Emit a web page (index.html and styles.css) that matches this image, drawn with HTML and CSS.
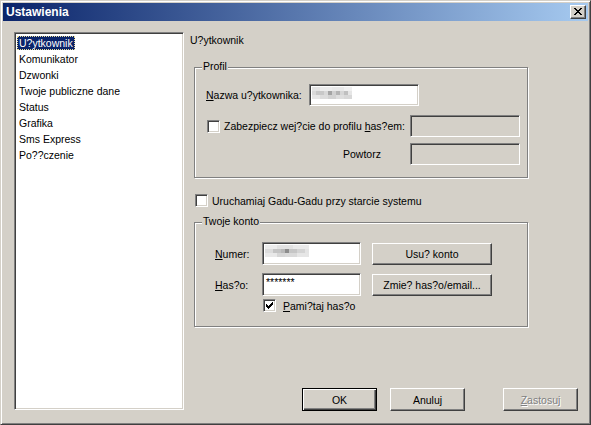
FILE: index.html
```html
<!DOCTYPE html>
<html lang="pl">
<head>
<meta charset="utf-8">
<title>Ustawienia</title>
<link rel="stylesheet" href="styles.css">
</head>
<body>
<div class="window">
  <div class="titlebar">
    <div class="title">Ustawienia</div>
    <div class="close">
      <svg width="8" height="7" viewBox="0 0 8 7" shape-rendering="crispEdges">
        <g fill="#000">
          <rect x="0" y="0" width="2" height="1"/><rect x="6" y="0" width="2" height="1"/>
          <rect x="1" y="1" width="2" height="1"/><rect x="5" y="1" width="2" height="1"/>
          <rect x="2" y="2" width="4" height="1"/>
          <rect x="3" y="3" width="2" height="1"/>
          <rect x="2" y="4" width="4" height="1"/>
          <rect x="1" y="5" width="2" height="1"/><rect x="5" y="5" width="2" height="1"/>
          <rect x="0" y="6" width="2" height="1"/><rect x="6" y="6" width="2" height="1"/>
        </g>
      </svg>
    </div>
  </div>
  <div class="client">
    <div class="listbox">
      <div class="item"><span class="sel">U?ytkownik</span></div>
      <div class="item">Komunikator</div>
      <div class="item">Dzwonki</div>
      <div class="item">Twoje publiczne dane</div>
      <div class="item">Status</div>
      <div class="item">Grafika</div>
      <div class="item">Sms Express</div>
      <div class="item">Po??czenie</div>
    </div>
    <div class="panel">
      <div class="header">U?ytkownik</div>

      <div class="group profil">
        <span class="legend">Profil</span>
        <div class="row r-name">
          <span class="lbl-name"><u>N</u>azwa u?ytkownika:</span>
          <div class="edit w110">
            <svg class="blur" width="44" height="16" viewBox="0 0 44 16" shape-rendering="crispEdges">
              <rect x="0" y="0" width="8" height="4" fill="#e4e4e4"/>
              <rect x="8" y="0" width="12" height="4" fill="#ececec"/>
              <rect x="20" y="0" width="12" height="4" fill="#e8e8e8"/>
              <rect x="32" y="0" width="8" height="4" fill="#f0f0f0"/>
              <rect x="0" y="4" width="4" height="4" fill="#dadada"/>
              <rect x="4" y="4" width="8" height="4" fill="#c8c8c8"/>
              <rect x="12" y="4" width="4" height="4" fill="#d8d8d8"/>
              <rect x="16" y="4" width="4" height="4" fill="#a4a4a4"/>
              <rect x="20" y="4" width="4" height="4" fill="#d0d0d0"/>
              <rect x="24" y="4" width="4" height="4" fill="#b4b4b4"/>
              <rect x="28" y="4" width="4" height="4" fill="#d6d6d6"/>
              <rect x="32" y="4" width="4" height="4" fill="#c0c0c0"/>
              <rect x="36" y="4" width="4" height="4" fill="#e6e6e6"/>
              <rect x="0" y="8" width="8" height="4" fill="#e6e6e6"/>
              <rect x="8" y="8" width="8" height="4" fill="#dcdcdc"/>
              <rect x="16" y="8" width="8" height="4" fill="#d2d2d2"/>
              <rect x="24" y="8" width="8" height="4" fill="#dedede"/>
              <rect x="32" y="8" width="8" height="4" fill="#d8d8d8"/>
            </svg>
          </div>
        </div>
        <div class="row r-prot">
          <span class="check"></span>
          <span class="ctext">Zabezpiecz wej?cie do profilu <u>h</u>as?em:</span>
          <div class="edit disabled w110 push"></div>
        </div>
        <div class="row r-rep">
          <span class="lbl-rep">Powtorz</span>
          <div class="edit disabled w110 push"></div>
        </div>
      </div>

      <div class="row r-auto">
        <span class="check"></span>
        <span class="ctext">Uruchamiaj Gadu-Gadu przy starcie systemu</span>
      </div>

      <div class="group konto">
        <span class="legend">Twoje konto</span>
        <div class="row r-num">
          <span class="lbl-k"><u>N</u>umer:</span>
          <div class="edit w99">
            <svg class="blur2" width="48" height="16" viewBox="0 0 48 16" shape-rendering="crispEdges">
              <rect x="0" y="0" width="12" height="4" fill="#ececec"/>
              <rect x="12" y="0" width="16" height="4" fill="#e2e2e2"/>
              <rect x="28" y="0" width="16" height="4" fill="#eaeaea"/>
              <rect x="0" y="4" width="8" height="4" fill="#dcdcdc"/>
              <rect x="8" y="4" width="8" height="4" fill="#c4c4c4"/>
              <rect x="16" y="4" width="4" height="4" fill="#b8b8b8"/>
              <rect x="20" y="4" width="4" height="4" fill="#8c8c8c"/>
              <rect x="24" y="4" width="8" height="4" fill="#c6c6c6"/>
              <rect x="32" y="4" width="8" height="4" fill="#d4d4d4"/>
              <rect x="40" y="4" width="4" height="4" fill="#e4e4e4"/>
              <rect x="0" y="8" width="12" height="4" fill="#e8e8e8"/>
              <rect x="12" y="8" width="8" height="4" fill="#d6d6d6"/>
              <rect x="20" y="8" width="12" height="4" fill="#dadada"/>
              <rect x="32" y="8" width="12" height="4" fill="#e6e6e6"/>
            </svg>
          </div>
          <div class="btn w120">Usu? konto</div>
        </div>
        <div class="row r-pass">
          <span class="lbl-k"><u>H</u>as?o:</span>
          <div class="edit w99"><span class="pw">*******</span></div>
          <div class="btn w120">Zmie? has?o/email...</div>
        </div>
        <div class="row r-rem">
          <span class="check checked">
            <svg width="7" height="7" viewBox="0 0 7 7" shape-rendering="crispEdges">
              <g fill="#000">
                <rect x="0" y="2" width="1" height="3"/>
                <rect x="1" y="3" width="1" height="3"/>
                <rect x="2" y="4" width="1" height="3"/>
                <rect x="3" y="3" width="1" height="3"/>
                <rect x="4" y="2" width="1" height="3"/>
                <rect x="5" y="1" width="1" height="3"/>
                <rect x="6" y="0" width="1" height="3"/>
              </g>
            </svg>
          </span>
          <span class="ctext rem"><u>P</u>ami?taj has?o</span>
        </div>
      </div>

      <div class="buttons">
        <div class="btn default">OK</div>
        <div class="btn">Anuluj</div>
        <div class="btn off"><u>Z</u>astosuj</div>
      </div>
    </div>
  </div>
</div>
</body>
</html>
```
FILE: styles.css
```css
* { box-sizing: border-box; }
html, body { margin: 0; padding: 0; }
body {
  width: 591px;
  height: 425px;
  overflow: hidden;
  background: #d4d0c8;
  font-family: "Liberation Sans", Arial, sans-serif;
  font-size: 10.5px;
  color: #000;
}
u { text-decoration: underline; text-underline-offset: 1px; }

.window {
  width: 591px;
  height: 425px;
  background: #d4d0c8;
  border: 1px solid;
  border-color: #d4d0c8 #404040 #404040 #d4d0c8;
  box-shadow: inset 1px 1px #fff, inset -1px -1px #808080;
  padding: 2px;
  display: flex;
  flex-direction: column;
}

.titlebar {
  flex: none;
  height: 18px;
  display: flex;
  align-items: center;
  padding: 0 2px 0 3px;
  background: linear-gradient(to right, #0a246a, #a6caf0);
  color: #fff;
  font-weight: bold;
  font-size: 12px;
}
.title { flex: 1; line-height: 18px; }
.close {
  width: 16px;
  height: 14px;
  background: #d4d0c8;
  border: 1px solid;
  border-color: #fff #404040 #404040 #fff;
  box-shadow: inset -1px -1px #808080;
  display: flex;
  align-items: center;
  justify-content: center;
  padding: 0 1px 1px 0;
}
.close svg { display: block; }

.client {
  flex: 1;
  display: flex;
  padding: 11px 0 0 11px;
}

.listbox {
  flex: none;
  width: 170px;
  height: 378px;
  background: #fff;
  border: 1px solid;
  border-color: #808080 #fff #fff #808080;
  box-shadow: inset 1px 1px #404040, inset -1px -1px #d4d0c8;
  padding: 2px 2px;
}
.item {
  height: 16px;
  line-height: 17px;
  padding-left: 2px;
  white-space: nowrap;
}
.item .sel {
  display: inline-block;
  margin-left: -2px;
  padding: 0 2px;
  line-height: 14px;
  height: 14px;
  margin-top: 1px;
  vertical-align: top;
  background: #0a246a;
  color: #fff;
  outline: 1px dotted #e8dc98;
  outline-offset: -1px;
}

.panel {
  flex: 1;
  display: flex;
  flex-direction: column;
  margin-left: 6px;
  padding: 0 10px 11px 0;
}
.header { height: 16px; line-height: 16px; }

.group {
  position: relative;
  width: 334px;
  margin-left: 4px;
  border: 1px solid #808080;
  box-shadow: inset 1px 1px #fff, 1px 1px #fff;
}
.legend {
  position: absolute;
  top: -8px;
  left: 7px;
  padding: 0 1px;
  line-height: 13px;
  background: #d4d0c8;
}
.profil {
  margin-top: 19px;
  height: 111px;
  padding: 0 7px 0 11px;
}
.konto {
  margin-top: 15px;
  height: 105px;
  padding: 0 0 0 20px;
}

.row { display: flex; align-items: center; }
.r-name { margin-top: 16px; height: 22px; }
.lbl-name { width: 103px; white-space: nowrap; }
.r-prot { margin-top: 9px; height: 22px; }
.r-prot .check { margin-left: 1px; }
.r-rep { margin-top: 6px; height: 22px; }
.lbl-rep { margin-left: 137px; }
.push { margin-left: auto; }

.r-auto { margin-top: 16px; margin-left: 5px; height: 13px; }

.r-num { margin-top: 19px; height: 23px; }
.r-pass { margin-top: 8px; height: 23px; }
.lbl-k { width: 47px; }
.r-rem { margin-top: 3px; height: 13px; }
.r-rem .check { margin-left: 48px; }
.rem { margin-left: 7px !important; }

.check {
  flex: none;
  width: 13px;
  height: 13px;
  background: #fff;
  border: 1px solid;
  border-color: #808080 #fff #fff #808080;
  box-shadow: inset 1px 1px #404040, inset -1px -1px #d4d0c8;
  display: flex;
  align-items: flex-start;
  justify-content: flex-start;
  padding: 2px 0 0 2px;
}
.check svg { display: block; }
.ctext { margin-left: 4px; white-space: nowrap; }

.edit {
  flex: none;
  height: 22px;
  background: #fff;
  border: 1px solid;
  border-color: #808080 #fff #fff #808080;
  box-shadow: inset 1px 1px #404040, inset -1px -1px #d4d0c8;
  padding: 1px 0 0 2px;
  position: relative;
}
.edit.disabled { background: #d4d0c8; }
.r-num .edit, .r-pass .edit { height: 23px; }
.w110 { width: 110px; }
.w99 { width: 99px; }
.blur { display: block; margin: 1px 0 0 0; }
.blur2 { display: block; margin: 1px 0 0 0; }
.pw { display: block; line-height: 14px; padding-left: 1px; }

.btn {
  flex: none;
  width: 75px;
  height: 23px;
  background: #d4d0c8;
  border: 1px solid;
  border-color: #fff #404040 #404040 #fff;
  box-shadow: inset -1px -1px #808080;
  display: flex;
  align-items: center;
  justify-content: center;
  white-space: nowrap;
}
.w120 { width: 120px; margin-left: 11px; height: 22px; }
.btn.default {
  border: 1px solid #000;
  box-shadow: inset 1px 1px #fff, inset -1px -1px #404040, inset -2px -2px #808080;
}
.btn.off { color: #808080; text-shadow: 1px 1px #fff; }

.buttons {
  margin-top: auto;
  display: flex;
  justify-content: flex-end;
  gap: 13px;
}
.buttons .btn.off { margin-left: 25px; }
```
